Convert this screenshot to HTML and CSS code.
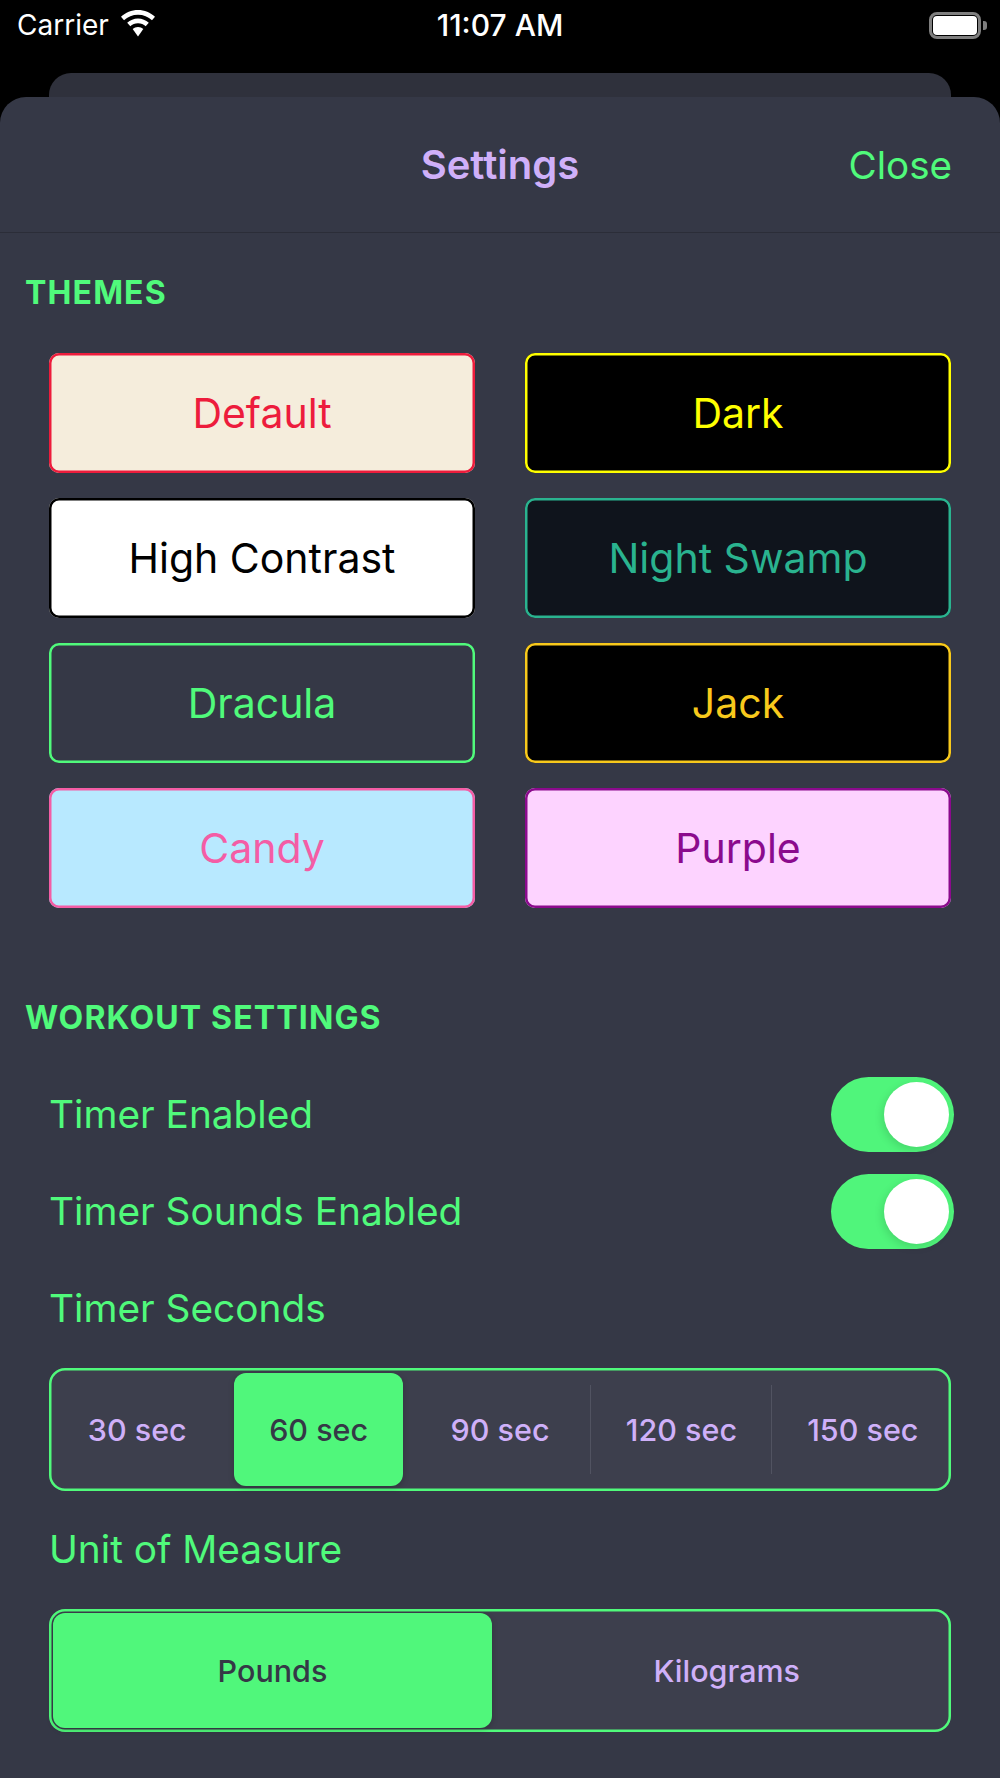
FILE: index.html
```html
<!DOCTYPE html>
<html>
  <head>
    <meta charset="UTF-8">
    <meta name="viewport" content="width=device-width, initial-scale=1.0">
    <title>Settings</title>
    <link rel="stylesheet" href="styles.css">
  </head>
  <body>
    <div class="status-bar">
      <div class="status-left">
        <span>Carrier</span>
        <svg class="wifi" width="38" height="27" viewBox="0 0 36 27">
          <path d="M18 0C11.500 0 5.600 2.500 1 6.800L4 10.300C7.700 6.800 12.600 4.800 18 4.800S28.300 6.800 32 10.300L35 6.800C30.400 2.500 24.500 0 18 0Z" fill="#fff"/>
          <path d="M18 8.500C13.900 8.500 10.100 10.100 7.200 12.800L10.300 16.300C12.300 14.400 15 13.300 18 13.300S23.700 14.400 25.700 16.300L28.800 12.800C25.900 10.100 22.100 8.500 18 8.500Z" fill="#fff"/>
          <path d="M18 17C16 17 14.100 17.800 12.700 19.100L18 26.500L23.300 19.100C21.900 17.800 20 17 18 17Z" fill="#fff"/>
        </svg>
      </div>
      <span class="status-time">11:07 AM</span>
      <div class="battery">
        <div class="battery-body"><div class="battery-fill"></div></div>
        <div class="battery-cap"></div>
      </div>
    </div>

    <div class="back-sheet"></div>

    <div class="sheet">
      <div class="sheet-header">
        <h1>Settings</h1>
        <span class="close">Close</span>
      </div>

      <h2 class="section-title">THEMES</h2>
      <div class="themes">
        <div class="theme theme-default">Default</div>
        <div class="theme theme-dark">Dark</div>
        <div class="theme theme-contrast">High Contrast</div>
        <div class="theme theme-swamp">Night Swamp</div>
        <div class="theme theme-dracula">Dracula</div>
        <div class="theme theme-jack">Jack</div>
        <div class="theme theme-candy">Candy</div>
        <div class="theme theme-purple">Purple</div>
      </div>

      <h2 class="section-title workout-title">WORKOUT SETTINGS</h2>
      <div class="settings">
        <div class="row">
          <span>Timer Enabled</span>
          <div class="toggle"><div class="knob"></div></div>
        </div>
        <div class="row">
          <span>Timer Sounds Enabled</span>
          <div class="toggle"><div class="knob"></div></div>
        </div>
        <div class="row">
          <span>Timer Seconds</span>
        </div>
        <div class="segments seconds">
          <div class="segment">30 sec</div>
          <div class="segment selected">60 sec</div>
          <div class="segment">90 sec</div>
          <div class="segment divided">120 sec</div>
          <div class="segment divided">150 sec</div>
        </div>
        <div class="row unit-label">
          <span>Unit of Measure</span>
        </div>
        <div class="segments units">
          <div class="segment selected">Pounds</div>
          <div class="segment">Kilograms</div>
        </div>
      </div>
    </div>
  </body>
</html>
```

FILE: styles.css
```css
* {
  box-sizing: border-box;
  margin: 0;
  padding: 0;
}

body {
  position: relative;
  height: 1778px;
  overflow: hidden;
  background-color: #000;
  font-family: Inter, "Liberation Sans", sans-serif;
  color: #50fa7b;
}

.status-bar {
  position: relative;
  display: flex;
  justify-content: space-between;
  align-items: center;
  height: 50px;
  padding: 0 13px 0 17px;
  color: #fff;
  font-size: 28px;
}

.status-left {
  display: flex;
  align-items: center;
  gap: 10px;
}

.wifi {
  margin-top: -3px;
}

.status-time {
  position: absolute;
  left: 0;
  right: 0;
  text-align: center;
  font-size: 30px;
  font-weight: 500;
}

.battery {
  display: flex;
  align-items: center;
}

.battery-body {
  width: 52px;
  height: 27px;
  padding: 1px;
  border: 3px solid #7f7f7f;
  border-radius: 8px;
}

.battery-fill {
  height: 100%;
  background-color: #fff;
  border-radius: 4px;
}

.battery-cap {
  width: 4px;
  height: 9px;
  margin-left: 2px;
  background-color: #7f7f7f;
  border-radius: 0 3px 3px 0;
}

.back-sheet {
  position: absolute;
  top: 73px;
  left: 49px;
  right: 49px;
  height: 60px;
  background-color: #2f313c;
  border-radius: 22px 22px 0 0;
}

.sheet {
  position: absolute;
  top: 97px;
  left: 0;
  right: 0;
  bottom: 0;
  background-color: #353846;
  border-radius: 26px 26px 0 0;
}

.sheet-header {
  position: relative;
  height: 136px;
  border-bottom: 1px solid #2b2d38;
  display: flex;
  justify-content: flex-end;
  align-items: center;
  padding-right: 48px;
}

.sheet-header h1 {
  position: absolute;
  left: 0;
  right: 0;
  text-align: center;
  font-size: 40px;
  font-weight: 600;
  color: #cfb0f9;
}

.close {
  font-size: 38.6px;
}

.section-title {
  padding-left: 25px;
  margin-top: 42px;
  font-size: 32px;
  line-height: 36px;
  font-weight: 700;
  letter-spacing: 1.15px;
}

.themes {
  display: grid;
  grid-template-columns: 426px 426px;
  column-gap: 50px;
  row-gap: 25px;
  padding-left: 49px;
  margin-top: 42px;
}

.theme {
  display: flex;
  align-items: center;
  justify-content: center;
  height: 120px;
  font-size: 41px;
  border-radius: 10px;
  box-shadow: inset 0 0 0 2.5px currentColor;
}

.theme-default {
  background-color: #f5eddc;
  color: #ed1c3c;
}

.theme-dark {
  background-color: #000;
  color: #ffff00;
}

.theme-contrast {
  background-color: #fff;
  color: #000;
}

.theme-swamp {
  background-color: #0f141c;
  color: #2ab38f;
}

.theme-dracula {
  background-color: #353846;
  color: #50fa7b;
}

.theme-jack {
  background-color: #000;
  color: #f8c91c;
}

.theme-candy {
  background-color: #b8e9ff;
  color: #f45da5;
}

.theme-purple {
  background-color: #fdd3ff;
  color: #8b0a8d;
}

.workout-title {
  margin-top: 92px;
}

.settings {
  padding: 0 49px;
  margin-top: 41px;
}

.row {
  display: flex;
  justify-content: space-between;
  align-items: center;
  height: 75px;
  margin-bottom: 22px;
  font-size: 38.8px;
}

.row span {
  margin-top: -2px;
}

.toggle {
  display: flex;
  justify-content: flex-end;
  align-items: center;
  width: 123px;
  height: 75px;
  margin-right: -3px;
  padding-right: 5px;
  background-color: #50f57b;
  border-radius: 38px;
}

.knob {
  width: 65px;
  height: 65px;
  background-color: #fff;
  border-radius: 50%;
  box-shadow: -2px 3px 8px rgba(0, 0, 0, 0.12);
}

.segments {
  display: flex;
  justify-content: center;
  height: 123px;
  padding: 5px 0;
  background-color: #3d3f4d;
  border-radius: 16px;
  box-shadow: inset 0 0 0 2.5px #50fa7b;
  color: #cfb0f9;
  font-size: 30.5px;
  font-weight: 450;
}

.segment {
  flex: none;
  width: 181.4px;
  display: flex;
  align-items: center;
  justify-content: center;
  position: relative;
  border-radius: 12px;
}

.segment.selected {
  background-color: #50f77b;
  color: #353846;
  box-shadow: 0 2px 6px rgba(0, 0, 0, 0.2);
}

.seconds .segment.selected {
  width: 169.4px;
  margin: 0 6px;
}

.segment.divided::before {
  content: "";
  position: absolute;
  left: -1px;
  top: 12px;
  bottom: 12px;
  width: 1px;
  background-color: #515361;
}

.unit-label {
  margin-top: 21px;
  margin-bottom: 22px;
}

.units {
  padding: 4px 0;
}

.units .segment {
  width: 453.5px;
}

.units .segment.selected {
  width: 439px;
  margin-left: 6.5px;
  margin-right: 8px;
}
```
